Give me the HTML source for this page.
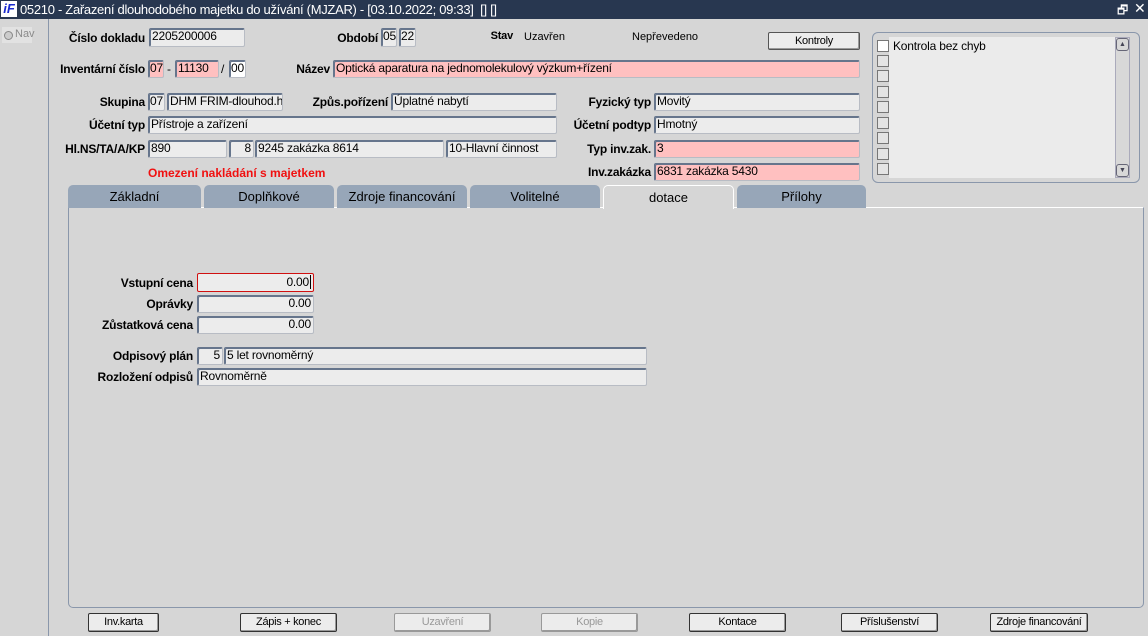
<!DOCTYPE html>
<html><head><meta charset="utf-8"><style>
*{box-sizing:border-box}
body{margin:0;width:1148px;height:636px;background:#d6d6d6;font-family:"Liberation Sans",sans-serif;font-size:12px;color:#000;position:relative;overflow:hidden}
.a{position:absolute;white-space:nowrap}
.l{position:absolute;font-weight:bold;text-align:right;white-space:nowrap;line-height:18px;letter-spacing:-0.2px}
.f{position:absolute;background:#ececec;border:1px solid #b8bcc4;border-top-color:#66758c;border-left-color:#66758c;box-shadow:inset 1px 1px 0 #66758c;border-radius:2px;height:18px;line-height:15px;padding-left:2px;white-space:nowrap;overflow:hidden;letter-spacing:-0.2px}
.p{background:#ffc0c0}
.r{text-align:right;padding-right:2px}
.tab{position:absolute;top:185px;height:23px;background:#97a6b8;border-radius:5px 5px 0 0;text-align:center;line-height:23px;font-size:13px}
.b{position:absolute;top:613px;height:19px;border:1px solid #333;border-radius:2px;background:#ececec;text-align:center;line-height:17px;font-size:11px;box-shadow:inset -1px -1px 0 #999;letter-spacing:-0.3px}
.cb{position:absolute;left:877px;width:12px;height:12px;border:1px solid #777;background:#e4e4e4}
</style></head><body>
<div class="a" style="left:0;top:0;width:1148px;height:19px;background:#283750"></div>
<div class="a" style="left:1px;top:1px;width:16px;height:16px;background:#fff;color:#1a2ad0;font-weight:bold;font-style:italic;font-size:13px;line-height:16px;text-align:center">iF</div>
<div class="a" style="left:20px;top:1px;color:#fff;font-size:13px;line-height:17px;letter-spacing:-0.3px">05210 - Zařazení dlouhodobého majetku do užívání (MJZAR) - [03.10.2022; 09:33]&nbsp; [] []</div>
<div class="a" style="left:1117px;top:1px;color:#fff;font-size:12px">🗗</div>
<div class="a" style="left:1134px;top:0;color:#fff;font-size:14px">✕</div>
<div class="a" style="left:48px;top:19px;width:1px;height:617px;background:#8a97ab"></div>
<div class="a" style="left:2px;top:27px;width:30px;height:16px;background:#e2e2e2"></div>
<div class="a" style="left:4px;top:31px;width:9px;height:9px;border-radius:50%;background:#ccc;border:1px solid #888"></div>
<div class="a" style="left:15px;top:28px;color:#8a8a8a;font-size:11px">Nav</div>

<div class="l" style="right:1003px;top:29px">Číslo dokladu</div>
<div class="f" style="left:149px;top:28px;width:96px;height:19px">2205200006</div>
<div class="l" style="right:770px;top:29px">Období</div>
<div class="f" style="left:381px;top:28px;width:16px;height:19px;padding-left:1px">05</div>
<div class="f" style="left:399px;top:28px;width:17px;height:19px;padding-left:1px">22</div>
<div class="l" style="right:635px;top:27px;font-size:11px">Stav</div>
<div class="a" style="left:524px;top:31px;font-size:11px">Uzavřen</div>
<div class="a" style="left:632px;top:31px;font-size:11px">Nepřevedeno</div>
<div class="b" style="left:768px;top:32px;width:92px;height:18px;border-color:#555">Kontroly</div>

<div class="l" style="right:1003px;top:60px">Inventární číslo</div>
<div class="f p" style="left:148px;top:60px;width:16px;padding-left:1px">07</div>
<div class="a" style="left:167px;top:62px">-</div>
<div class="f p" style="left:175px;top:60px;width:44px">11130</div>
<div class="a" style="left:221px;top:62px">/</div>
<div class="f" style="left:229px;top:60px;width:17px;background:#fff;padding-left:1px">00</div>
<div class="l" style="right:818px;top:60px">Název</div>
<div class="f p" style="left:333px;top:60px;width:527px">Optická aparatura na jednomolekulový výzkum+řízení</div>

<div class="l" style="right:1003px;top:93px">Skupina</div>
<div class="f" style="left:148px;top:93px;width:17px;padding-left:1px">07</div>
<div class="f" style="left:167px;top:93px;width:116px">DHM FRIM-dlouhod.hmo</div>
<div class="l" style="right:760px;top:93px">Způs.pořízení</div>
<div class="f" style="left:391px;top:93px;width:166px">Úplatné nabytí</div>
<div class="l" style="right:497px;top:93px">Fyzický typ</div>
<div class="f" style="left:654px;top:93px;width:206px">Movitý</div>

<div class="l" style="right:1003px;top:116px">Účetní typ</div>
<div class="f" style="left:148px;top:116px;width:409px">Přístroje a zařízení</div>
<div class="l" style="right:497px;top:116px">Účetní podtyp</div>
<div class="f" style="left:654px;top:116px;width:206px">Hmotný</div>

<div class="l" style="right:1003px;top:140px">Hl.NS/TA/A/KP</div>
<div class="f" style="left:148px;top:140px;width:79px">890</div>
<div class="f r" style="left:229px;top:140px;width:25px">8</div>
<div class="f" style="left:255px;top:140px;width:189px">9245 zakázka 8614</div>
<div class="f" style="left:446px;top:140px;width:111px">10-Hlavní činnost</div>
<div class="l" style="right:497px;top:140px">Typ inv.zak.</div>
<div class="f p" style="left:654px;top:140px;width:206px">3</div>

<div class="a" style="left:148px;top:165px;color:#f01010;font-weight:bold;line-height:16px">Omezení nakládání s majetkem</div>
<div class="l" style="right:497px;top:163px">Inv.zakázka</div>
<div class="f p" style="left:654px;top:163px;width:206px">6831 zakázka 5430</div>

<div class="a" style="left:872px;top:32px;width:268px;height:151px;border:1px solid #8a97ab;border-radius:6px"></div>
<div class="a" style="left:889px;top:37px;width:226px;height:141px;background:#ebebeb"></div>
<div class="a" style="left:1115px;top:37px;width:15px;height:141px;background:#d8d8d8;border:1px solid #aab"></div>
<div class="a" style="left:1116px;top:38px;width:13px;height:13px;border:1px solid #667;border-radius:3px;font-size:7px;text-align:center;line-height:12px;color:#445">▲</div>
<div class="a" style="left:1116px;top:164px;width:13px;height:13px;border:1px solid #667;border-radius:3px;font-size:7px;text-align:center;line-height:12px;color:#445">▼</div>
<div class="cb" style="top:40px;background:#fff"></div>
<div class="a" style="left:893px;top:39px;letter-spacing:-0.2px">Kontrola bez chyb</div>
<div class="cb" style="top:55px"></div><div class="cb" style="top:70px"></div><div class="cb" style="top:86px"></div><div class="cb" style="top:101px"></div><div class="cb" style="top:117px"></div><div class="cb" style="top:132px"></div><div class="cb" style="top:148px"></div><div class="cb" style="top:163px"></div>

<div class="a" style="left:68px;top:207px;width:1076px;height:401px;border:1px solid #8a97ab;border-top:1px solid #fff;border-radius:0 0 5px 5px;background:#d6d6d6"></div>
<div class="tab" style="left:68px;width:133px">Základní</div>
<div class="tab" style="left:204px;width:130px">Doplňkové</div>
<div class="tab" style="left:337px;width:130px">Zdroje financování</div>
<div class="tab" style="left:470px;width:130px">Volitelné</div>
<div class="tab" style="left:603px;width:131px;background:#d6d6d6;border:1px solid #fff;border-bottom:none;height:24px">dotace</div>
<div class="tab" style="left:737px;width:129px">Přílohy</div>

<div class="l" style="right:955px;top:274px">Vstupní cena</div>
<div class="f r" style="left:197px;top:273px;width:117px;border:1px solid #d01010;box-shadow:none;height:19px;line-height:17px">0.00<span style="border-left:1px solid #000;margin-left:1px"></span></div>
<div class="l" style="right:955px;top:295px">Oprávky</div>
<div class="f r" style="left:197px;top:295px;width:117px">0.00</div>
<div class="l" style="right:955px;top:316px">Zůstatková cena</div>
<div class="f r" style="left:197px;top:316px;width:117px">0.00</div>
<div class="l" style="right:955px;top:347px">Odpisový plán</div>
<div class="f r" style="left:197px;top:347px;width:26px">5</div>
<div class="f" style="left:224px;top:347px;width:423px">5 let rovnoměrný</div>
<div class="l" style="right:955px;top:368px">Rozložení odpisů</div>
<div class="f" style="left:197px;top:368px;width:450px">Rovnoměrně</div>

<div class="b" style="left:88px;width:71px">Inv.karta</div>
<div class="b" style="left:240px;width:97px">Zápis + konec</div>
<div class="b" style="left:394px;width:97px;color:#999;border-color:#999">Uzavření</div>
<div class="b" style="left:541px;width:97px;color:#999;border-color:#999">Kopie</div>
<div class="b" style="left:689px;width:97px">Kontace</div>
<div class="b" style="left:841px;width:97px">Příslušenství</div>
<div class="b" style="left:990px;width:98px">Zdroje financování</div>
</body></html>
